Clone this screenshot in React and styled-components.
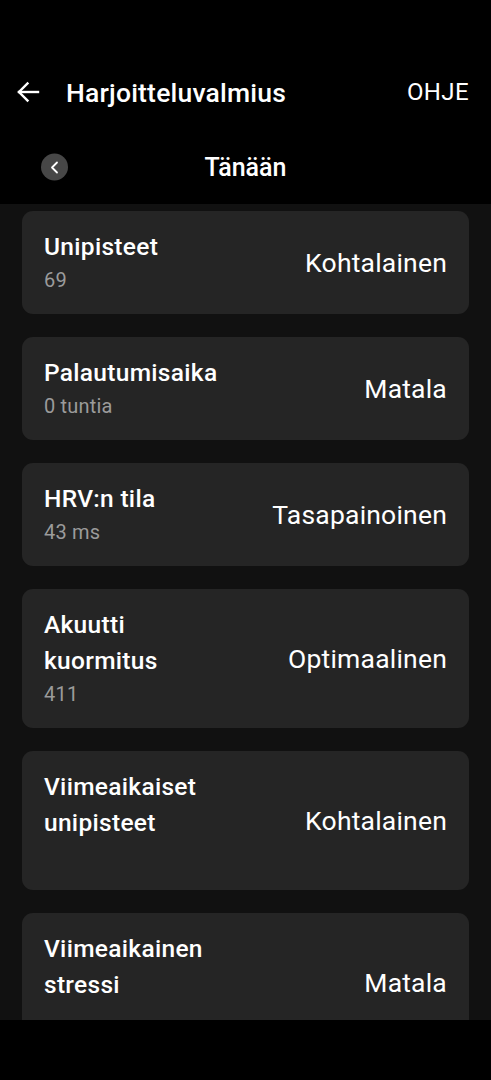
import React from 'react';
import styled, { createGlobalStyle } from 'styled-components';

const GlobalStyle = createGlobalStyle`
  *, *::before, *::after {
    box-sizing: border-box;
  }
  html, body {
    margin: 0;
    padding: 0;
    background: #000;
  }
  body {
    font-family: Roboto, "Noto Sans", "Liberation Sans", sans-serif;
    color: #fff;
  }
`;

const Screen = styled.div`
  width: 491px;
  height: 1080px;
  display: flex;
  flex-direction: column;
  background: #000;
  overflow: hidden;
`;

const TopBar = styled.div`
  display: flex;
  flex-direction: column;
  flex: 0 0 auto;
`;

const AppBar = styled.div`
  display: flex;
  align-items: center;
  height: 56px;
  margin-top: 64px;
  padding: 0 22px 0 15px;
`;

const IconButton = styled.button`
  display: flex;
  align-items: center;
  justify-content: center;
  width: 26px;
  height: 26px;
  padding: 0;
  border: none;
  background: none;
  color: #fff;
  margin-right: 25px;
`;

const Title = styled.h1`
  flex: 1;
  margin: 0;
  font-size: 26.5px;
  font-weight: 500;
  letter-spacing: 0.2px;
`;

const HelpLink = styled.span`
  font-size: 24px;
  font-weight: 400;
  letter-spacing: 0.4px;
`;

const DateRow = styled.div`
  position: relative;
  display: flex;
  align-items: center;
  justify-content: center;
  height: 40px;
  margin-top: 27px;
`;

const PrevButton = styled.button`
  position: absolute;
  left: 41px;
  top: 50%;
  transform: translateY(-50%);
  width: 27px;
  height: 27px;
  border-radius: 50%;
  border: none;
  padding: 0;
  background: #474747;
  display: flex;
  align-items: center;
  justify-content: center;
`;

const DateLabel = styled.span`
  font-size: 25px;
  font-weight: 500;
`;

const Scroll = styled.div`
  flex: 0 0 816px;
  background: #111;
  overflow: hidden;
  margin-top: 17px;
  padding: 7px 22px 0;
  display: flex;
  flex-direction: column;
  gap: 23px;
`;

const Card = styled.div`
  flex: 0 0 auto;
  display: flex;
  align-items: center;
  justify-content: space-between;
  background: #252525;
  border-radius: 11px;
  padding: 18px 22px 19px;
`;

const Labels = styled.div`
  display: flex;
  flex-direction: column;
  max-width: 186px;
`;

const Name = styled.div`
  font-size: 24.5px;
  line-height: 36px;
  font-weight: 500;
  letter-spacing: 0.3px;
`;

const Sub = styled.div`
  font-size: 20px;
  line-height: 30px;
  height: 30px;
  color: #9b9b9b;
  letter-spacing: 0.2px;
`;

const Value = styled.div`
  font-size: 26.5px;
  font-weight: 400;
  letter-spacing: 0.2px;
`;

const metrics = [
  { name: 'Unipisteet', sub: '69', value: 'Kohtalainen' },
  { name: 'Palautumisaika', sub: '0 tuntia', value: 'Matala' },
  { name: 'HRV:n tila', sub: '43 ms', value: 'Tasapainoinen' },
  { name: 'Akuutti kuormitus', sub: '411', value: 'Optimaalinen' },
  { name: 'Viimeaikaiset unipisteet', sub: '', value: 'Kohtalainen' },
  { name: 'Viimeaikainen stressi', sub: '', value: 'Matala' },
];

export default function App() {
  return (
    <Screen>
      <GlobalStyle />
      <TopBar>
        <AppBar>
          <IconButton aria-label="Takaisin">
            <svg width="24" height="24" viewBox="0 0 24 24" fill="none" stroke="#fff" strokeWidth="2.4" strokeLinecap="square">
              <path d="M3 12h19" />
              <path d="M11.5 3.5L3 12l8.5 8.5" />
            </svg>
          </IconButton>
          <Title>Harjoitteluvalmius</Title>
          <HelpLink>OHJE</HelpLink>
        </AppBar>
        <DateRow>
          <PrevButton aria-label="Edellinen">
            <svg width="14" height="14" viewBox="0 0 14 14" fill="none" stroke="#fff" strokeWidth="1.8" strokeLinecap="round" strokeLinejoin="round">
              <path d="M9 2L4 7l5 5" />
            </svg>
          </PrevButton>
          <DateLabel>Tänään</DateLabel>
        </DateRow>
      </TopBar>
      <Scroll>
        {metrics.map((m) => (
          <Card key={m.name}>
            <Labels>
              <Name>{m.name}</Name>
              <Sub>{m.sub}</Sub>
            </Labels>
            <Value>{m.value}</Value>
          </Card>
        ))}
      </Scroll>
    </Screen>
  );
}
